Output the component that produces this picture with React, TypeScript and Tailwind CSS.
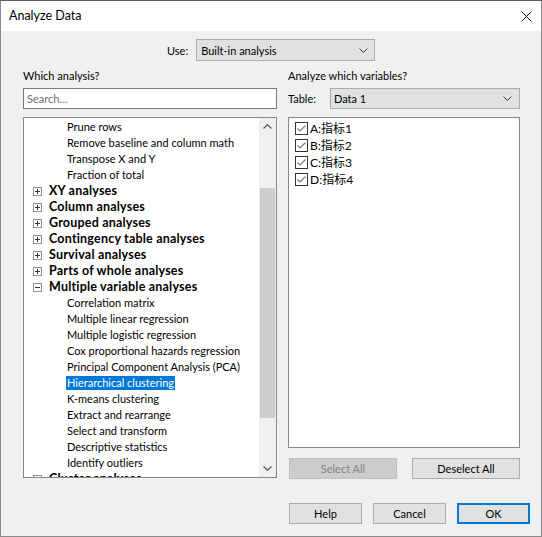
import React from "react";

const Chevron = ({ up = false, className = "" }: { up?: boolean; className?: string }) => (
  <svg width="9" height="5" viewBox="0 0 9 5" className={className}>
    <path d={up ? "M0.5 4.5 L4.5 0.8 L8.5 4.5" : "M0.5 0.5 L4.5 4.2 L8.5 0.5"} fill="none" stroke="#606060" strokeWidth="1.4" />
  </svg>
);

const ComboChevron = () => (
  <svg width="9" height="5" viewBox="0 0 9 5">
    <path d="M0.5 0.5 L4.5 4.5 L8.5 0.5" fill="none" stroke="#3c3c3c" strokeWidth="1" />
  </svg>
);

const Expander = ({ open }: { open: boolean }) => (
  <svg width="9" height="9" viewBox="0 0 9 9" className="shrink-0">
    <rect x="0.5" y="0.5" width="8" height="8" fill="white" stroke="#919191" />
    <path d="M2 4.5 H7" stroke="#333" strokeWidth="1" />
    {!open && <path d="M4.5 2 V7" stroke="#333" strokeWidth="1" />}
  </svg>
);

const Check = () => (
  <svg width="13" height="13" viewBox="0 0 13 13" className="shrink-0">
    <rect x="0.5" y="0.5" width="12" height="12" fill="white" stroke="#333333" />
    <path d="M2.5 6.5 L5 9 L10.5 3.5" fill="none" stroke="#7a7a7a" strokeWidth="1.2" />
  </svg>
);

type Row = { t: string; kind: "child" | "cat" | "catOpen" | "sel" };

const rows: Row[] = [
  { t: "Prune rows", kind: "child" },
  { t: "Remove baseline and column math", kind: "child" },
  { t: "Transpose X and Y", kind: "child" },
  { t: "Fraction of total", kind: "child" },
  { t: "XY analyses", kind: "cat" },
  { t: "Column analyses", kind: "cat" },
  { t: "Grouped analyses", kind: "cat" },
  { t: "Contingency table analyses", kind: "cat" },
  { t: "Survival analyses", kind: "cat" },
  { t: "Parts of whole analyses", kind: "cat" },
  { t: "Multiple variable analyses", kind: "catOpen" },
  { t: "Correlation matrix", kind: "child" },
  { t: "Multiple linear regression", kind: "child" },
  { t: "Multiple logistic regression", kind: "child" },
  { t: "Cox proportional hazards regression", kind: "child" },
  { t: "Principal Component Analysis (PCA)", kind: "child" },
  { t: "Hierarchical clustering", kind: "sel" },
  { t: "K-means clustering", kind: "child" },
  { t: "Extract and rearrange", kind: "child" },
  { t: "Select and transform", kind: "child" },
  { t: "Descriptive statistics", kind: "child" },
  { t: "Identify outliers", kind: "child" },
  { t: "Cluster analyses", kind: "cat" },
];

const vars = ["A:指标1", "B:指标2", "C:指标3", "D:指标4"];

export default function App() {
  return (
    <div className="w-[542px] h-[537px] flex flex-col border border-[#8a8a8a] border-t-[#5a5a5a] bg-[#f0f0f0] overflow-hidden text-[11px] text-black font-['Lato','Noto_Sans_CJK_SC',sans-serif] leading-none select-none">
      {/* Title bar */}
      <div className="h-[30px] bg-white flex items-center shrink-0">
        <span className="pl-[8px] text-[12.5px]">Analyze Data</span>
        <svg width="11" height="11" viewBox="0 0 11 11" className="ml-auto mr-[9px]">
          <path d="M0.5 0.5 L10.5 10.5 M10.5 0.5 L0.5 10.5" stroke="#111" strokeWidth="1" />
        </svg>
      </div>

      {/* Use row */}
      <div className="mt-[8px] h-[22px] flex items-center pl-[166px]">
        <span>Use:</span>
        <div className="ml-[8px] w-[179px] h-[22px] bg-[#e1e1e1] border border-[#adadad] flex items-center pl-[4px] pr-[6px]">
          <span>Built-in analysis</span>
          <span className="ml-auto"><ComboChevron /></span>
        </div>
      </div>

      {/* Columns */}
      <div className="flex mt-[6px] pl-[22px]">
        {/* Left */}
        <div className="w-[254px] flex flex-col">
          <div className="h-[16px] flex items-center">Which analysis?</div>
          <div className="mt-[5px] h-[21px] bg-white border border-[#7a7a7a] flex items-center pl-[3px] text-[#6d6d6d]">
            Search…
          </div>
          <div className="mt-[8px] h-[361px] bg-white border border-[#828790] flex overflow-hidden">
            <div className="flex-1 flex flex-col pt-[1px] overflow-hidden">
              {rows.map((r, i) => (
                <div
                  key={i}
                  className={
                    r.kind === "child"
                      ? "h-[16px] shrink-0 flex items-center whitespace-nowrap pb-[2px]"
                      : "h-[16px] shrink-0 flex items-center whitespace-nowrap"
                  }
                >
                  {r.kind === "child" && <span className="pl-[43px]">{r.t}</span>}
                  {r.kind === "sel" && (
                    <span className="ml-[42px] px-[1px] h-[14px] flex items-center pb-[1px] bg-[#0078d7] text-white">{r.t}</span>
                  )}
                  {(r.kind === "cat" || r.kind === "catOpen") && (
                    <>
                      <span className="pl-[9px] flex items-center"><Expander open={r.kind === "catOpen"} /></span>
                      <span className="pl-[7px] font-bold text-[12.5px] tracking-[0.2px]">{r.t}</span>
                    </>
                  )}
                </div>
              ))}
            </div>
            <div className="w-[17px] shrink-0 bg-[#f0f0f0] flex flex-col">
              <div className="h-[17px] flex items-center justify-center"><Chevron up /></div>
              <div className="flex-1 flex flex-col px-[1px]">
                <div className="mt-[53px] h-[230px] bg-[#cdcdcd]" />
              </div>
              <div className="h-[17px] flex items-center justify-center"><Chevron /></div>
            </div>
          </div>
        </div>

        {/* Right */}
        <div className="w-[232px] ml-[11px] flex flex-col">
          <div className="h-[16px] flex items-center">Analyze which variables?</div>
          <div className="mt-[5px] h-[21px] flex items-center">
            <span>Table:</span>
            <div className="ml-auto w-[190px] h-[21px] bg-[#e1e1e1] border border-[#adadad] flex items-center pl-[3px] pr-[7px]">
              <span>Data 1</span>
              <span className="ml-auto"><ComboChevron /></span>
            </div>
          </div>
          <div className="mt-[8px] h-[331px] bg-white border border-[#828790] flex flex-col pt-[4px] pl-[6px]">
            {vars.map((v) => (
              <div key={v} className="h-[17px] flex items-start">
                <Check />
                <span className="ml-[2px] leading-[13px] text-[12px]">{v}</span>
              </div>
            ))}
          </div>
          <div className="mt-[10px] h-[21px] flex justify-between pl-[1px]">
            <div className="w-[108px] h-[21px] bg-[#cccccc] border border-[#bfbfbf] flex items-center justify-center text-[#838383]">
              Select All
            </div>
            <div className="w-[108px] h-[21px] bg-[#e1e1e1] border border-[#adadad] flex items-center justify-center">
              Deselect All
            </div>
          </div>
        </div>
      </div>

      {/* Bottom buttons */}
      <div className="mt-[24px] h-[21px] flex gap-[11px] pl-[288px]">
        <div className="w-[73px] h-[21px] bg-[#e1e1e1] border border-[#adadad] flex items-center justify-center">Help</div>
        <div className="w-[73px] h-[21px] bg-[#e1e1e1] border border-[#adadad] flex items-center justify-center">Cancel</div>
        <div className="w-[73px] h-[21px] bg-[#e1e1e1] border-2 border-[#0078d7] flex items-center justify-center">OK</div>
      </div>
    </div>
  );
}
